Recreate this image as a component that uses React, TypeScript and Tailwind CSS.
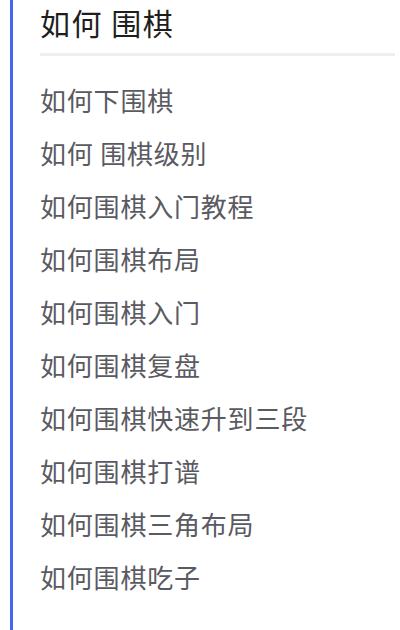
import React from "react";

const items = [
  "如何下围棋",
  "如何 围棋级别",
  "如何围棋入门教程",
  "如何围棋布局",
  "如何围棋入门",
  "如何围棋复盘",
  "如何围棋快速升到三段",
  "如何围棋打谱",
  "如何围棋三角布局",
  "如何围棋吃子",
];

export default function App() {
  return (
    <div
      className="w-[400px] h-[630px] bg-white overflow-hidden"
      style={{ fontFamily: '"Noto Sans CJK SC", "Noto Sans", sans-serif' }}
    >
      <div className="ml-[10px] h-full border-l-[3px] border-[#4565f5] pl-[27px] pr-[5px]">
        <div className="h-[45px] leading-[45px] text-[30px] tracking-[1.5px] text-[#1e1e1e]">如何 围棋</div>
        <div className="mt-[8px] h-[3px] bg-[#eeeeee]" />
        <ul className="mt-[17px]">
          {items.map((t) => (
            <li key={t} className="h-[53px] leading-[53px] text-[26px] tracking-[0.8px] text-[#5a5a62]">
              {t}
            </li>
          ))}
        </ul>
      </div>
    </div>
  );
}
